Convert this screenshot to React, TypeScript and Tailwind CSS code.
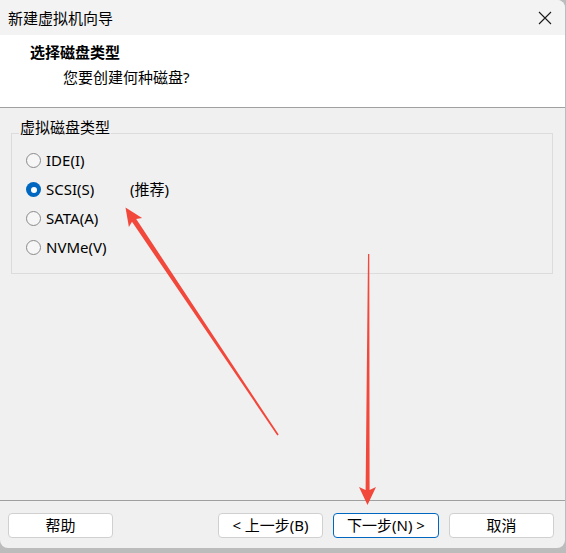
import React from 'react'

const options = [
  { label: 'IDE(I)', checked: false },
  { label: 'SCSI(S)', checked: true, note: '(推荐)' },
  { label: 'SATA(A)', checked: false },
  { label: 'NVMe(V)', checked: false },
]

function Radio({ checked }: { checked: boolean }) {
  if (checked) {
    return (
      <span className="w-[15px] h-[15px] rounded-full bg-[#0067c0] flex items-center justify-center shrink-0">
        <span className="w-[6px] h-[6px] rounded-full bg-white" />
      </span>
    )
  }
  return <span className="w-[15px] h-[15px] rounded-full border border-[#8a8a8a] bg-[#f6f6f6] shrink-0" />
}

function Button({ children, primary }: { children: React.ReactNode; primary?: boolean }) {
  return (
    <button
      className={
        primary
          ? 'w-[106px] h-[25px] rounded-[4px] bg-white border border-[#0067c0] text-[15px] text-black leading-none'
          : 'w-[105px] h-[25px] rounded-[4px] bg-white border border-[#d0d0d0] text-[15px] text-black leading-none'
      }
    >
      {children}
    </button>
  )
}

export default function App() {
  return (
    <div className="relative w-[566px] h-[553px] bg-[#bcbcbc] overflow-hidden font-['Noto_Sans','Noto_Sans_CJK_SC',sans-serif] text-[#1a1a1a]">
      <div className="w-[565px] h-[548px] flex flex-col bg-[#f0f0f0] rounded-b-[8px] rounded-tr-[8px] overflow-hidden">
        {/* title bar */}
        <div className="h-[35px] shrink-0 bg-[#f3f3f3] flex items-center justify-between pl-[8px] pr-[13px]">
          <span className="text-[15px] leading-[20px] text-black">新建虚拟机向导</span>
          <svg width="14" height="14" viewBox="0 0 14 14">
            <path d="M1 1 L13 13 M13 1 L1 13" stroke="#1a1a1a" strokeWidth="1.1" fill="none" />
          </svg>
        </div>

        {/* header */}
        <div className="h-[73px] shrink-0 bg-white border-b border-[#a0a0a0] pl-[30px] pt-[7px] flex flex-col gap-[5px]">
          <div className="text-[15px] leading-[20px] font-bold text-black">选择磁盘类型</div>
          <div className="text-[15px] leading-[20px] text-black pl-[33px]">您要创建何种磁盘?</div>
        </div>

        {/* content */}
        <div className="flex-1 pl-[11px] pr-[12px]">
          <fieldset className="mt-[9px] border border-[#dcdcdc] pb-[11px]">
            <legend className="ml-[7px] px-[1px] text-[15px] leading-[20px] pb-[12px] text-black">虚拟磁盘类型</legend>
            <div className="flex flex-col -mt-[3px] pl-[14px]">
              {options.map((o) => (
                <div key={o.label} className="h-[29px] flex items-center gap-[5px] text-[15px] text-black">
                  <Radio checked={o.checked} />
                  <span className="w-[79px]">{o.label}</span>
                  {o.note && <span>{o.note}</span>}
                </div>
              ))}
            </div>
          </fieldset>
        </div>

        {/* footer */}
        <div className="h-[48px] shrink-0 border-t border-[#a0a0a0] pt-[12px] pl-[8px] pr-[11px] flex items-start">
          <Button>帮助</Button>
          <div className="ml-auto flex gap-[10px]">
            <Button>&lt; 上一步(B)</Button>
            <Button primary>下一步(N) &gt;</Button>
            <Button>取消</Button>
          </div>
        </div>
      </div>

      {/* annotation arrows */}
      <svg className="absolute inset-0 pointer-events-none" width="566" height="553" viewBox="0 0 566 553">
        <polygon
          points="125.5,207.5 142.1,217.9 136.2,219.0 278.7,434.6 277.3,435.4 132.0,221.8 128.9,226.9"
          fill="#f2473b"
        />
        <polygon
          points="367.5,505 359,487 365.6,490 368,254 369.3,254 369.6,490 376,487"
          fill="#f2473b"
        />
      </svg>
    </div>
  )
}
